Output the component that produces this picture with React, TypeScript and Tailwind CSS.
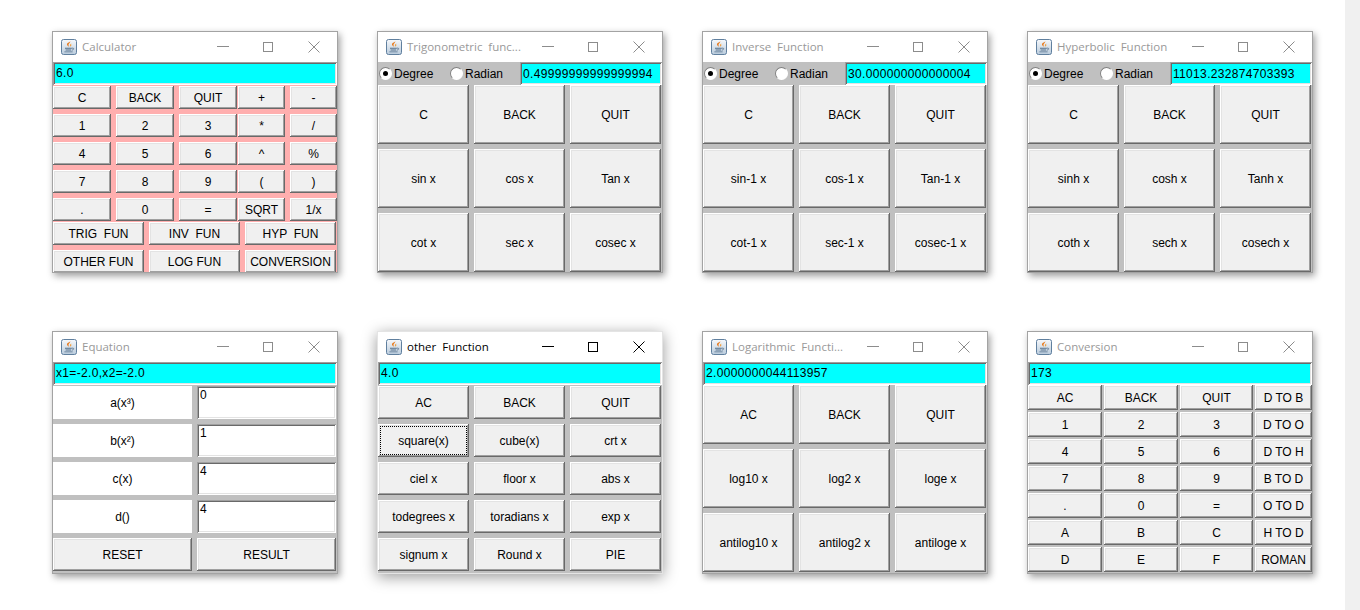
import React from 'react';

const btnClass =
    'flex items-center justify-center bg-[#f0f0f0] text-black whitespace-pre shadow-[inset_-1px_-1px_0_#696969,inset_1px_1px_0_#ffffff,inset_-2px_-2px_0_#a0a0a0,inset_2px_2px_0_#e3e3e3]';

const fieldClass =
    'shadow-[inset_1px_1px_0_#a0a0a0,inset_-1px_-1px_0_#ffffff,inset_2px_2px_0_#696969,inset_-2px_-2px_0_#e3e3e3]';

const radioClass = 'w-[13px] h-[13px] rounded-full bg-white border border-[#808080] border-r-white border-b-white flex items-center justify-center';

const JavaIcon = () => (
    <svg width="16" height="16" viewBox="0 0 16 16" className="shrink-0">
        <defs>
            <linearGradient id="cup" x1="0" y1="0" x2="0" y2="1">
                <stop offset="0" stopColor="#f6f8fb" />
                <stop offset="1" stopColor="#b9cbdc" />
            </linearGradient>
        </defs>
        <rect x="0.5" y="0.5" width="15" height="15" rx="2" fill="url(#cup)" stroke="#5f7f9e" />
        <path d="M9.2 2.2c.5 1.4-2.2 2.5-1.6 4.3.2.5.5.9.8 1.2-1.6-.5-2.9-1.6-2.3-3 .4-1 2.6-1.3 3.1-2.5z" fill="#e8791c" />
        <path d="M10.4 4.6c-1 .6-1.8 1.2-1.3 2.3.1.3.2.5.1.8.8-.5 1.4-1.1 1-2 0-.4 0-.7.2-1.1z" fill="#f0a040" />
        <path d="M4 8.8h6.8v1H4zM4.6 10.6h5.4v.9H4.6zM3.4 12.4h8.2v.9H3.4z" fill="#54708c" />
        <path d="M10.9 9.2c1.4-.4 2.2.2 1.7 1-.3.5-1 .8-1.9 1" fill="none" stroke="#54708c" strokeWidth="0.8" />
    </svg>
);

const WinControls = ({ color }: { color: string }) => (
    <div className="flex h-full">
        <div className="w-[44px] flex items-center justify-center">
            <svg width="12" height="12" viewBox="0 0 12 12"><path d="M0 5.5h12" stroke={color} /></svg>
        </div>
        <div className="w-[46px] flex items-center justify-center">
            <svg width="12" height="12" viewBox="0 0 12 12"><rect x="1.5" y="1.5" width="9" height="9" fill="none" stroke={color} /></svg>
        </div>
        <div className="w-[46px] flex items-center justify-center">
            <svg width="12" height="12" viewBox="0 0 12 12"><path d="M0.5 0.5l11 11M11.5 0.5l-11 11" stroke={color} /></svg>
        </div>
    </div>
);

const Window = ({ title, active, bg, h, children }: { title: string; active?: boolean; bg: string; h: string; children: React.ReactNode }) => (
    <div className={`flex flex-col overflow-hidden border ${h} ${bg} ${active ? 'border-[#e4e4e4] shadow-[0_3px_14px_rgba(0,0,0,0.4)]' : 'border-[#a3a3a3] shadow-[2px_3px_7px_rgba(0,0,0,0.38)]'}`}>
        <div className="h-[30px] shrink-0 bg-white flex items-center pl-[8px]">
            <JavaIcon />
            <span className={`ml-[5px] flex-1 whitespace-pre text-[11.5px] font-['Open_Sans',sans-serif] ${active ? 'text-black' : 'text-[#999999]'}`}>{title}</span>
            <WinControls color={active ? '#000000' : '#8c8c8c'} />
        </div>
        {children}
    </div>
);

const Field = ({ value }: { value: string }) => (
    <div className={`h-[23px] shrink-0 bg-[#00ffff] pl-[3px] pr-[2px] pb-px flex items-center text-black tracking-[0.33px] ${fieldClass}`}>{value}</div>
);

const AngleBar = ({ value }: { value: string }) => (
    <div className="h-[23px] shrink-0 flex bg-[#c0c0c0]">
        <div className="w-[142px] flex items-center">
            <span className={`ml-[1px] ${radioClass}`}>
                <span className="w-[5px] h-[5px] rounded-full bg-black" />
            </span>
            <span className="ml-[2px] w-[56px]">Degree</span>
            <span className={radioClass} />
            <span className="ml-[2px]">Radian</span>
        </div>
        <div className={`flex-1 bg-[#00ffff] pl-[3px] flex items-center text-black whitespace-nowrap overflow-hidden tracking-[0.33px] ${fieldClass}`}>{value}</div>
    </div>
);

// 3 x 3 panel used by the trig, inverse, hyperbolic and log windows
const BigGrid = ({ items }: { items: string[] }) => (
    <div className="grid grid-cols-[91px_91px_91px] auto-rows-[59px] gap-x-[5px] gap-y-[5px]">
        {items.map(t => <button key={t} className={btnClass}>{t}</button>)}
    </div>
);

const Calculator = () => {
    const left = ['C', 'BACK', 'QUIT', '1', '2', '3', '4', '5', '6', '7', '8', '9', '.', '0', '='];
    const right = ['+', '-', '*', '/', '^', '%', '(', ')', 'SQRT', '1/x'];
    const bottom = ['TRIG  FUN', 'INV  FUN', 'HYP  FUN', 'OTHER FUN', 'LOG FUN', 'CONVERSION'];
    return (
        <Window title="Calculator" bg="bg-[#ffafaf]" h="h-[242px]">
            <Field value="6.0" />
            <div className="flex gap-[1px] pt-px">
                <div className="grid grid-cols-[58px_58px_58px] auto-rows-[23px] gap-[5px]">
                    {left.map(t => <button key={t} className={btnClass}>{t}</button>)}
                </div>
                <div className="grid grid-cols-[47px_47px] auto-rows-[23px] gap-[5px]">
                    {right.map(t => <button key={t} className={btnClass}>{t}</button>)}
                </div>
            </div>
            <div className="grid grid-cols-[91px_91px_91px] auto-rows-[23px] gap-[5px] pt-px">
                {bottom.map(t => <button key={t} className={btnClass}>{t}</button>)}
            </div>
        </Window>
    );
};

const Equation = () => (
    <Window title="Equation" bg="bg-[#c0c0c0]" h="h-[243px]">
        <Field value="x1=-2.0,x2=-2.0" />
        <div className="grid grid-cols-[139px_139px] auto-rows-[33px] gap-[5px] pt-px">
            {[['a(x³)', '0'], ['b(x²)', '1'], ['c(x)', '4'], ['d()', '4']].map(([label, val]) => (
                <React.Fragment key={label}>
                    <div className="bg-white flex items-center justify-center text-black">{label}</div>
                    <div className={`bg-white pl-[3px] pt-[2px] leading-[14px] text-black ${fieldClass}`}>{val}</div>
                </React.Fragment>
            ))}
            <button className={btnClass}>RESET</button>
            <button className={btnClass}>RESULT</button>
        </div>
    </Window>
);

const Other = () => {
    const items = ['AC', 'BACK', 'QUIT', 'square(x)', 'cube(x)', 'crt x', 'ciel x', 'floor x', 'abs x', 'todegrees x', 'toradians x', 'exp x', 'signum x', 'Round x', 'PIE'];
    return (
        <Window title="other  Function" active bg="bg-[#c0c0c0]" h="h-[243px]">
            <Field value="4.0" />
            <div className="grid grid-cols-[91px_91px_91px] auto-rows-[33px] gap-[5px] pt-px">
                {items.map(t => (
                    <button key={t} className={`${btnClass} ${t === 'square(x)' ? 'outline-1 outline-dotted outline-black -outline-offset-3' : ''}`}>{t}</button>
                ))}
            </div>
        </Window>
    );
};

const Conversion = () => {
    const items = ['AC', 'BACK', 'QUIT', 'D TO B', '1', '2', '3', 'D TO O', '4', '5', '6', 'D TO H', '7', '8', '9', 'B TO D', '.', '0', '=', 'O TO D', 'A', 'B', 'C', 'H TO D', 'D', 'E', 'F', 'ROMAN'];
    return (
        <Window title="Conversion" bg="bg-[#c0c0c0]" h="h-[243px]">
            <Field value="173" />
            <div className="grid grid-cols-[74px_74px_73px_57px] auto-rows-[25px] gap-x-[2px] gap-y-[2px]">
                {items.map((t, i) => <button key={i} className={btnClass}>{t}</button>)}
            </div>
        </Window>
    );
};

export default function App() {
    return (
        <div className="flex h-[610px] overflow-hidden bg-white text-[12px] font-['Liberation_Sans',Arial,sans-serif]">
            <div className="flex-1 pl-[52px] pt-[31px]">
                <div className="grid grid-cols-[286px_286px_286px_286px] gap-x-[39px] gap-y-[58px]">
                    <Calculator />
                    <Window title="Trigonometric  func..." bg="bg-[#c0c0c0]" h="h-[242px]">
                        <AngleBar value="0.49999999999999994" />
                        <BigGrid items={['C', 'BACK', 'QUIT', 'sin x', 'cos x', 'Tan x', 'cot x', 'sec x', 'cosec x']} />
                    </Window>
                    <Window title="Inverse  Function" bg="bg-[#c0c0c0]" h="h-[242px]">
                        <AngleBar value="30.000000000000004" />
                        <BigGrid items={['C', 'BACK', 'QUIT', 'sin-1 x', 'cos-1 x', 'Tan-1 x', 'cot-1 x', 'sec-1 x', 'cosec-1 x']} />
                    </Window>
                    <Window title="Hyperbolic  Function" bg="bg-[#c0c0c0]" h="h-[242px]">
                        <AngleBar value="11013.232874703393" />
                        <BigGrid items={['C', 'BACK', 'QUIT', 'sinh x', 'cosh x', 'Tanh x', 'coth x', 'sech x', 'cosech x']} />
                    </Window>
                    <Equation />
                    <Other />
                    <Window title="Logarithmic  Functi..." bg="bg-[#c0c0c0]" h="h-[243px]">
                        <Field value="2.0000000044113957" />
                        <BigGrid items={['AC', 'BACK', 'QUIT', 'log10 x', 'log2 x', 'loge x', 'antilog10 x', 'antilog2 x', 'antiloge x']} />
                    </Window>
                    <Conversion />
                </div>
            </div>
            <div className="w-[15px] bg-[#f0f0f0]" />
        </div>
    );
}
